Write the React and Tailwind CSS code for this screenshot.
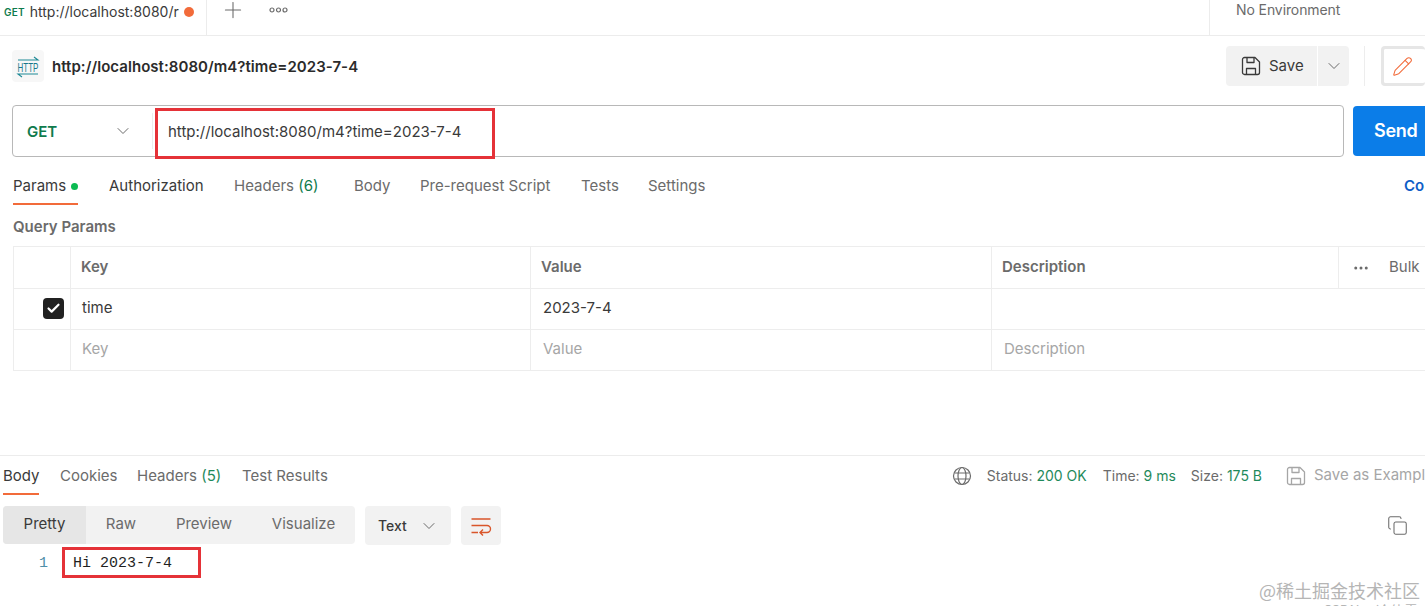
import { Check, ChevronDown, Copy, Ellipsis, Pencil, Plus } from 'lucide-react';
import React from 'react';

const HttpIcon = () => (
  <div className="w-8 h-8 rounded bg-[#f7f7f7] flex items-center justify-center">
    <svg width="32" height="32" viewBox="0 0 32 32" fill="none" stroke="#1f8a96" strokeWidth="1.1">
      <path d="M6 10h20l-4-3" />
      <path d="M26 24H6l4 3" />
      <text transform="translate(16 21.500) scale(0.64 1)" fontSize="12.500" textAnchor="middle" fill="#17788a" stroke="none" fontFamily="Liberation Sans, sans-serif">HTTP</text>
    </svg>
  </div>
);

const FloppyIcon = ({ className }) => (
  <svg width="20" height="20" viewBox="0 0 20 20" fill="none" stroke="currentColor" strokeWidth="1.3" strokeLinejoin="round" className={className}>
    <path d="M3.500 1.500h10.500l4.500 4.500v10.500a2 2 0 0 1-2 2h-13a2 2 0 0 1-2-2v-13a2 2 0 0 1 2-2z" />
    <path d="M6 2v4.500h7V2M5.500 18.500V12.500h9v6" />
  </svg>
);

const GlobeIcon = () => (
  <svg width="20" height="20" viewBox="0 0 20 20" fill="none" stroke="currentColor" strokeWidth="1.200">
    <circle cx="10" cy="10" r="8.500" />
    <ellipse cx="10" cy="10" rx="4" ry="8.500" />
    <path d="M2.500 7h15M2.500 13h15" />
  </svg>
);

const WrapIcon = () => (
  <svg width="22" height="22" viewBox="0 0 22 22" fill="none" stroke="#d9562b" strokeWidth="1.400">
    <path d="M1.500 4h19M1.500 10.500h15.500a3.500 3.500 0 0 1 0 7h-6.500M13 14.500l-3 3 3 3M1.500 17.500h6.500" />
  </svg>
);

const OpenDots = () => (
  <svg width="20" height="8" viewBox="0 0 20 8" fill="none" stroke="#6b6b6b" strokeWidth="1.200">
    <circle cx="3" cy="4" r="2" />
    <circle cx="9.500" cy="4" r="2" />
    <circle cx="16" cy="4" r="2" />
  </svg>
);

const TabItem = ({ children, active, width }) => (
  <div className={`h-full flex items-center shrink-0 ${width} ${active ? 'text-[#3a3a3a]' : 'text-[#6b6b6b]'}`}>
    {children}
  </div>
);

const Cell = ({ className, children }) => (
  <div className={`h-full shrink-0 flex items-center border-r border-[#ededed] ${className}`}>{children}</div>
);

const ParamRow = ({ className, first, keyText, value, description, header }) => (
  <div className={`flex items-center text-[15px] border-b border-[#ededed] ${className}`}>
    <Cell className="w-[57px] justify-end pr-[6px]">{first}</Cell>
    <Cell className="w-[460px] pl-[10px]">{keyText}</Cell>
    <Cell className="w-[461px] pl-[12px]">{value}</Cell>
    <div className={`h-full w-[347px] shrink-0 flex items-center pl-[12px] ${header ? 'border-r border-[#ededed]' : ''}`}>{description}</div>
    {header}
  </div>
);

const App = () => {
  return (
    <div className="relative w-[1425px] h-[606px] overflow-hidden bg-white font-['Inter',sans-serif] text-[#212121]">
      {/* top tab strip */}
      <div className="flex h-[36px] border-b border-[#ececec]">
        <div className="w-[207px] h-full border-r border-[#ececec] flex items-start pt-[4px] pl-[4px] shrink-0">
          <span className="text-[10px] leading-[16px] font-semibold text-[#0f7b4d] tracking-[0.2px]">GET</span>
          <span className="ml-[5px] text-[14px] leading-[16px] text-[#3a3a3a] w-[147px]">http://localhost:8080/r</span>
          <span className="ml-[7px] mt-[3px] w-[10px] h-[10px] rounded-full bg-[#f26b3a]" />
        </div>
        <div className="flex items-start pl-[13px] text-[#6b6b6b]">
          <Plus size={26} strokeWidth={1} className="-mt-[3px]" />
          <div className="ml-[23px] mt-[6px]"><OpenDots /></div>
        </div>
        <div className="ml-auto w-[216px] h-full border-l border-[#ececec] pl-[26px] pt-[2px] text-[14px] leading-[16px] text-[#6b6b6b] tracking-[-0.1px]">
          No Environment
        </div>
      </div>

      {/* request title */}
      <div className="flex items-center h-[60px] pl-[12px]">
        <HttpIcon />
        <span className="ml-[8px] pt-[2px] text-[15px] font-semibold text-[#2b2b2b] tracking-[0.05px]">http://localhost:8080/m4?time=2023-7-4</span>
        <div className="ml-auto flex items-center">
          <div className="flex h-[40px] w-[123px] rounded bg-[#f2f2f2] text-[#3a3a3a]">
            <div className="w-[92px] flex items-center pl-[15px] gap-[8px] border-r border-white text-[15px]">
              <FloppyIcon />
              Save
            </div>
            <div className="flex-1 flex items-center justify-center">
              <ChevronDown size={20} strokeWidth={1.2} className="text-[#6b6b6b]" />
            </div>
          </div>
          <div className="ml-[15px] w-px h-[40px] bg-[#ededed]" />
          <div className="ml-[16px] w-[44px] h-[40px] rounded border-[3px] border-[#e6e6e6] border-r-0 flex items-center pl-[8px]">
            <Pencil size={21} strokeWidth={1.2} className="text-[#f26b3a]" />
          </div>
        </div>
      </div>

      {/* url bar */}
      <div className="flex items-center gap-[9px] pl-[12px] mt-[9px] h-[52px]">
        <div className="flex items-center w-[1332px] h-[52px] rounded border border-[#b8b8b8]">
          <div className="w-[140px] h-[36px] flex items-center pl-[14px] border-r border-[#ededed]">
            <span className="pt-[2px] text-[15px] font-semibold text-[#0f7b4d] w-[86px]">GET</span>
            <ChevronDown size={20} strokeWidth={1.2} className="text-[#6b6b6b]" />
          </div>
          <span className="pl-[15px] pt-[2px] text-[15px] text-[#3a3a3a]">http://localhost:8080/m4?time=2023-7-4</span>
        </div>
        <div className="w-[72px] h-[50px] shrink-0 rounded-l bg-[#0b7de8] text-white text-[18px] font-semibold tracking-[-0.3px] flex items-center pb-[2px] pl-[21px]">
          Send
        </div>
      </div>

      {/* request tabs */}
      <div className="flex items-center h-[48px] pl-[13px] text-[15px]">
        <div className="relative h-full flex items-center pt-[10px] w-[96px] text-[#3a3a3a] shrink-0">
          Params
          <span className="ml-[5px] w-[7px] h-[7px] rounded-full bg-[#0cbb52]" />
          <span className="absolute left-0 bottom-0 w-[65px] h-[2px] bg-[#f26b3a]" />
        </div>
        <div className="h-full flex items-center pt-[10px]">
          <TabItem active width="w-[125px]">Authorization</TabItem>
          <TabItem width="w-[120px]">
            <span>Headers&nbsp;<span className="text-[#0f7b4d]">(6)</span></span>
          </TabItem>
          <TabItem width="w-[66px]">Body</TabItem>
          <TabItem width="w-[161px]">Pre-request Script</TabItem>
          <TabItem width="w-[67px]">Tests</TabItem>
          <TabItem width="w-[80px]">Settings</TabItem>
        </div>
        <span className="ml-auto pt-[10px] font-semibold text-[#0f5ec7] w-[21px] whitespace-nowrap">Co</span>
      </div>

      <div className="pl-[13px] mt-[12px] h-[20px] flex items-center text-[15px] font-semibold text-[#6b6b6b]">Query Params</div>

      {/* params table */}
      <div className="ml-[13px] mt-[9px] border-t border-l border-[#ededed]">
        <ParamRow
          className="h-[42px] font-semibold text-[#6b6b6b]"
          keyText="Key"
          value={<span className="-ml-[2px]">Value</span>}
          description={<span className="-ml-[2px]">Description</span>}
          header={
            <div className="flex items-center pl-[13px] font-normal whitespace-nowrap">
              <Ellipsis size={18} strokeWidth={2} className="text-[#6b6b6b]" />
              <span className="ml-[19px] text-[#6b6b6b]">Bulk</span>
              <span className="ml-[5px] text-[#f4a875]">E</span>
            </div>
          }
        />
        <ParamRow
          className="h-[41px] text-[#3a3a3a] [&>div]:pb-[2px]"
          first={
            <span className="w-[21px] h-[21px] rounded-[4px] bg-[#212121] flex items-center justify-center mt-[1px] -ml-[2px]">
              <Check size={15} strokeWidth={3.5} className="text-white" />
            </span>
          }
          keyText={<span className="ml-[1px]">time</span>}
          value="2023-7-4"
        />
        <ParamRow className="h-[41px] text-[#a6a6a6] [&>div]:pb-[2px]" keyText={<span className="ml-[1px]">Key</span>} value="Value" description="Description" />
      </div>

      {/* response */}
      <div className="mt-[84px] border-t border-[#ececec] h-[40px] flex items-center pl-[3px] text-[15px]">
        <div className="relative h-full flex items-center pt-[2px] w-[57px] text-[#3a3a3a] shrink-0">
          Body
          <span className="absolute left-0 bottom-0 w-[36px] h-[2px] bg-[#f26b3a]" />
        </div>
        <div className="h-full flex items-center pt-[2px]">
          <TabItem width="w-[77px]">Cookies</TabItem>
          <TabItem width="w-[105px]">
            <span>Headers&nbsp;<span className="text-[#1f8a5b]">(5)</span></span>
          </TabItem>
          <TabItem width="w-[100px]">Test Results</TabItem>
        </div>
        <div className="ml-auto flex items-center text-[14px] text-[#6b6b6b]">
          <GlobeIcon />
          <span className="ml-[15px]">Status: <span className="text-[#1f8a5b]">200 OK</span></span>
          <span className="ml-[16px]">Time: <span className="text-[#1f8a5b]">9 ms</span></span>
          <span className="ml-[15px]">Size: <span className="text-[#1f8a5b]">175 B</span></span>
          <FloppyIcon className="ml-[24px] text-[#a6a6a6]" />
          <span className="ml-[8px] w-[111px] whitespace-nowrap overflow-hidden text-[15px] text-[#a6a6a6]">Save as Example</span>
        </div>
      </div>

      {/* response toolbar */}
      <div className="flex items-start pl-[3px] mt-[11px] pr-[18px] text-[15px]">
        <div className="flex h-[38px] w-[352px] pb-[2px] rounded bg-[#f2f2f2] text-[#6b6b6b]">
          <div className="w-[83px] -mb-[2px] pb-[2px] rounded-l bg-[#e6e6e6] text-[#3a3a3a] flex items-center justify-center">Pretty</div>
          <div className="w-[70px] flex items-center justify-center">Raw</div>
          <div className="w-[96px] flex items-center justify-center">Preview</div>
          <div className="w-[103px] flex items-center justify-center">Visualize</div>
        </div>
        <div className="ml-[10px] w-[86px] h-[39px] rounded bg-[#f2f2f2] flex items-center pl-[13px] text-[14px] font-medium text-[#3a3a3a]">
          Text
          <ChevronDown size={20} strokeWidth={1.2} className="ml-[12px] text-[#6b6b6b]" />
        </div>
        <div className="ml-[10px] w-[40px] h-[39px] rounded bg-[#f2f2f2] flex items-center justify-center">
          <WrapIcon />
        </div>
        <Copy size={21} strokeWidth={1.2} className="ml-auto mt-[9px] -mr-[1px] text-[#6b6b6b]" />
      </div>

      {/* response body */}
      <div className="flex items-center pl-[39px] mt-[9px] h-[20px] font-['Liberation_Mono',monospace] text-[15px]">
        <span className="text-[#4f8fa8]">1</span>
        <span className="ml-[25px] text-[#1f1f1f]">Hi 2023-7-4</span>
      </div>

      {/* annotation boxes over the capture */}
      <div className="absolute left-[155px] top-[108px] w-[340px] h-[51px] border-[3px] border-[#e53238]" />
      <div className="absolute left-[62px] top-[547px] w-[139px] h-[31px] border-[3px] border-[#e53238]" />

      {/* watermark */}
      <div className="absolute right-[5px] top-[579px] text-right text-[18px] leading-[22px] text-[#b5b5b5] font-['Noto_Sans_CJK_SC',sans-serif]">
        @稀土掘金技术社区
      </div>
      <div className="absolute right-[7px] top-[602px] text-[14px] leading-[16px] text-[#b5b5b5] font-['Noto_Sans_CJK_SC',sans-serif]">
        CSDN @冷仙雪
      </div>
    </div>
  );
};

export default App;
